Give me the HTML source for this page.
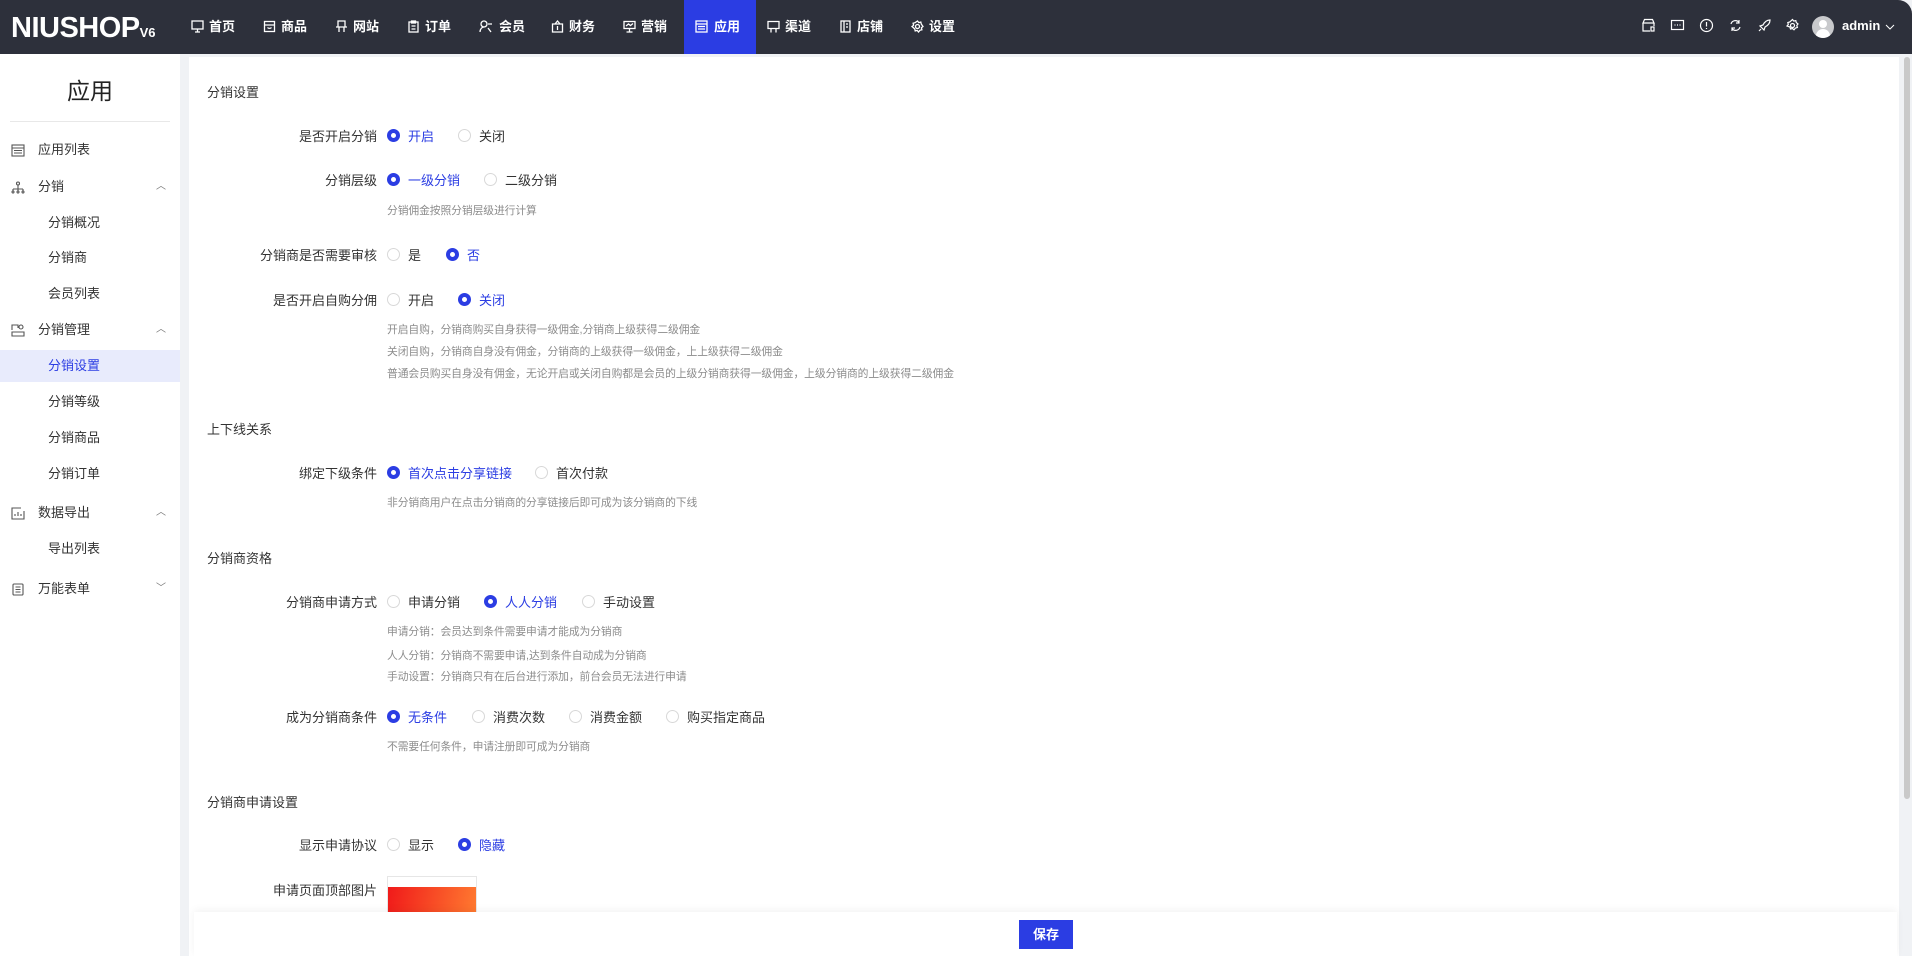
<!DOCTYPE html>
<html><head><meta charset="utf-8"><style>
*{margin:0;padding:0;box-sizing:border-box}
body{width:1912px;height:956px;overflow:hidden;background:#f0f2f5;font-family:"Liberation Sans","Noto Sans CJK SC",sans-serif;color:#333;position:relative;font-size:14px}
.top{position:absolute;left:0;top:0;width:1912px;height:54px;background:#2d303b;border-radius:0 14px 0 0}
.logo{position:absolute;left:11px;top:12px;color:#fff;font-size:29px;font-weight:bold;letter-spacing:-0.5px}
.logo small{font-size:13px;letter-spacing:0}
.nav{position:absolute;top:0;height:54px;width:72px;color:#fff;font-weight:bold;font-size:13px;line-height:54px;padding-left:0}
.nav svg{position:absolute;left:0;top:20px}
.nav span{position:absolute;left:18px}
.act{background:#2b3de3}
.ri{position:absolute;top:18px}
.side{position:absolute;left:0;top:54px;width:180px;height:902px;background:#fff}
.side h1{position:absolute;left:0;width:180px;text-align:center;top:18px;font-size:23px;font-weight:normal;color:#222}
.sep{position:absolute;left:10px;width:160px;top:67px;border-top:1px solid #e8e8e8}
.mi{position:absolute;left:0;width:180px;height:36px;line-height:36px;font-size:13px;color:#333}
.mi svg{position:absolute;left:11px;top:12px}
.mi .t{position:absolute;left:38px}
.mi .s{position:absolute;left:48px}
.mi .c{position:absolute;left:156px;top:0;font-size:10px;color:#777}
.mi.on{background:#e8ebfc;color:#2b3de3}
.main{position:absolute;left:189px;top:57px;width:1710px;height:899px;background:#fff}
.h{position:absolute;left:207px;font-size:13px;color:#333}
.lb{position:absolute;right:1535px;font-size:13px;color:#333;white-space:nowrap}
.r{position:absolute;font-size:13px;color:#333;white-space:nowrap;padding-left:21px}
.r::before{content:"";position:absolute;left:0;top:50%;margin-top:-7px;width:13px;height:13px;border:1px solid #d8d8d8;border-radius:50%;box-sizing:border-box;background:#fff}
.r.on{color:#2b3de3}
.r.on::before{border:4px solid #2b3de3;background:#fff}
.hint{position:absolute;left:387px;font-size:10.8px;color:#8c8c8c;white-space:nowrap;letter-spacing:-0.1px}
.bar{position:absolute;left:194px;top:912px;width:1703px;height:44px;background:#fff;box-shadow:0 -2px 8px rgba(0,0,0,0.05)}
.btn{position:absolute;left:1019px;top:920px;width:54px;height:29px;background:#2b3de3;color:#fff;font-size:13px;font-weight:bold;text-align:center;line-height:29px}
.sb{position:absolute;left:1904px;top:57px;width:6px;height:742px;background:#c9c9c9;border-radius:3px}
</style></head><body>
<div class="top">
<div class="logo">NIUSHOP<small>V6</small></div>
<div class="nav" style="left:191px"><svg width="13" height="13" viewBox="0 0 13 13" fill="none" stroke="#fff" stroke-width="1.3"><rect x="1" y="1" width="11" height="8"/><path d="M6.5 9v3M4 12h5"/></svg><span>首页</span></div>
<div class="nav" style="left:263px"><svg width="13" height="13" viewBox="0 0 13 13" fill="none" stroke="#fff" stroke-width="1.3"><rect x="1.5" y="1.5" width="10" height="10"/><path d="M1.5 5h10M4.5 7.5c1 1.2 3 1.2 4 0"/></svg><span>商品</span></div>
<div class="nav" style="left:335px"><svg width="13" height="13" viewBox="0 0 13 13" fill="none" stroke="#fff" stroke-width="1.3"><path d="M3 1h7v6H3zM1 7h11M4 7v5M9 7v5"/></svg><span>网站</span></div>
<div class="nav" style="left:407px"><svg width="13" height="13" viewBox="0 0 13 13" fill="none" stroke="#fff" stroke-width="1.3"><rect x="2" y="2" width="9" height="10"/><path d="M4.5 1h4v2h-4zM4.5 6h4M4.5 9h4"/></svg><span>订单</span></div>
<div class="nav" style="left:479px"><svg width="14" height="13" viewBox="0 0 14 13" fill="none" stroke="#fff" stroke-width="1.3"><circle cx="5" cy="4" r="3"/><path d="M1 12c0-3 2-5 4-5M9 8l3 4M9 4h4"/></svg><span style="left:20px">会员</span></div>
<div class="nav" style="left:551px"><svg width="13" height="13" viewBox="0 0 13 13" fill="none" stroke="#fff" stroke-width="1.3"><path d="M1.5 4h10v8h-10zM4 4l2.5-3 2.5 3M6.5 6v4"/></svg><span>财务</span></div>
<div class="nav" style="left:623px"><svg width="13" height="13" viewBox="0 0 13 13" fill="none" stroke="#fff" stroke-width="1.3"><rect x="1" y="1.5" width="11" height="7"/><path d="M3 6l2.5-2 2 1.5L10 3.5M6.5 8.5v3M3.5 12h6"/></svg><span>营销</span></div>
<div class="nav act" style="left:684px;padding-left:0"><svg style="left:11px" width="13" height="13" viewBox="0 0 13 13" fill="none" stroke="#fff" stroke-width="1.3"><rect x="1" y="1" width="11" height="11"/><path d="M1 4h11M3 6.5h7M3 9h7"/></svg><span style="left:30px">应用</span></div>
<div class="nav" style="left:767px"><svg width="13" height="13" viewBox="0 0 13 13" fill="none" stroke="#fff" stroke-width="1.3"><path d="M1 1.5h11v7H1zM4 8.5v4M9 8.5v4"/></svg><span>渠道</span></div>
<div class="nav" style="left:839px"><svg width="13" height="13" viewBox="0 0 13 13" fill="none" stroke="#fff" stroke-width="1.3"><rect x="2" y="1" width="9" height="11"/><path d="M5 1v11M7 4h2M7 7h2"/></svg><span>店铺</span></div>
<div class="nav" style="left:911px"><svg width="13" height="13" viewBox="0 0 13 13" fill="none" stroke="#fff" stroke-width="1.3"><circle cx="6.5" cy="6.5" r="2"/><path d="M6.5 1l1.3 1.6 2-.5.5 2L12 6.5l-1.6 1.3.5 2-2 .5-1.4 1.7-1.3-1.6-2 .5-.5-2L1 6.5l1.6-1.3-.5-2 2-.5z"/></svg><span>设置</span></div>
<svg class="ri" style="left:1641px" width="15" height="15" viewBox="0 0 15 15" fill="none" stroke="#fff" stroke-width="1.2"><path d="M2 5l1.5-3.5h8L13 5H2zM2 5v8h7M13 5v3"/><rect x="10" y="9" width="3" height="4"/></svg>
<svg class="ri" style="left:1670px" width="15" height="15" viewBox="0 0 15 15" fill="none" stroke="#fff" stroke-width="1.2"><rect x="1.5" y="2.5" width="12" height="9"/><path d="M4.5 7h1M7 7h1M9.5 7h1"/></svg>
<svg class="ri" style="left:1699px" width="15" height="15" viewBox="0 0 15 15" fill="none" stroke="#fff" stroke-width="1.2"><circle cx="7.5" cy="7.5" r="6"/><path d="M7.5 4v4.5M7.5 10v1"/></svg>
<svg class="ri" style="left:1728px" width="15" height="15" viewBox="0 0 15 15" fill="none" stroke="#fff" stroke-width="1.2"><path d="M3 6a4.5 4.5 0 0 1 8-1.5M12 9a4.5 4.5 0 0 1-8 1.5M11 2v3H8M4 13v-3h3"/></svg>
<svg class="ri" style="left:1757px" width="15" height="15" viewBox="0 0 15 15" fill="none" stroke="#fff" stroke-width="1.2"><path d="M5 10l-2-2 3-1c2-4 5-5 7-5 0 2-1 5-5 7l-1 3-2-2zM4 11l-2 2"/></svg>
<svg class="ri" style="left:1785px" width="15" height="15" viewBox="0 0 15 15" fill="none" stroke="#fff" stroke-width="1.2"><circle cx="7.5" cy="7.5" r="2"/><path d="M7.5 1.5l1.3 1.6 2-.5.5 2 1.7 1.4-1.2 1.5.6 2-2 .6-1.4 1.7-1.5-1.3-2 .5-.6-2L2 8l1.3-1.5-.5-2 2-.5z"/></svg>
<div style="position:absolute;left:1812px;top:16px;width:22px;height:22px;border-radius:50%;background:#c8c9cc;overflow:hidden"><div style="position:absolute;left:7px;top:4px;width:8px;height:8px;border-radius:50%;background:#fff"></div><div style="position:absolute;left:4px;top:13px;width:14px;height:10px;border-radius:7px 7px 0 0;background:#fff"></div></div>
<div style="position:absolute;left:1842px;top:18px;color:#fff;font-weight:bold;font-size:13px">admin</div>
<svg style="position:absolute;left:1885px;top:23px" width="10" height="8" viewBox="0 0 10 8" fill="none" stroke="#fff" stroke-width="1"><path d="M1 2l4 4 4-4"/></svg>
</div>

<div class="side">
<h1>应用</h1>
<div class="sep"></div>
</div>
<div class="mi" style="top:132px"><svg width="14" height="13" viewBox="0 0 14 13" fill="none" stroke="#555" stroke-width="1.1"><rect x="1" y="1" width="12" height="11"/><path d="M1 4h12M3 6.5h8M3 9h8"/></svg><span class="t">应用列表</span></div>
<div class="mi" style="top:169px"><svg width="14" height="13" viewBox="0 0 14 13" fill="none" stroke="#555" stroke-width="1.1"><circle cx="7" cy="2.5" r="1.5"/><path d="M7 4v4M2 8h10M2 8v2M7 8v2M12 8v2"/><circle cx="2" cy="11" r="1"/><circle cx="7" cy="11" r="1"/><circle cx="12" cy="11" r="1"/></svg><span class="t">分销</span><span class="c">︿</span></div>
<div class="mi" style="top:205px"><span class="s">分销概况</span></div>
<div class="mi" style="top:240px"><span class="s">分销商</span></div>
<div class="mi" style="top:276px"><span class="s">会员列表</span></div>
<div class="mi" style="top:312px"><svg width="14" height="13" viewBox="0 0 14 13" fill="none" stroke="#555" stroke-width="1.1"><path d="M1 6V1h6v3M1 8h12v4H1z"/><circle cx="10" cy="3" r="2"/></svg><span class="t">分销管理</span><span class="c">︿</span></div>
<div class="mi on" style="top:350px;height:32px;line-height:32px"><span class="s">分销设置</span></div>
<div class="mi" style="top:384px"><span class="s">分销等级</span></div>
<div class="mi" style="top:420px"><span class="s">分销商品</span></div>
<div class="mi" style="top:456px"><span class="s">分销订单</span></div>
<div class="mi" style="top:495px"><svg width="14" height="13" viewBox="0 0 14 13" fill="none" stroke="#555" stroke-width="1.1"><path d="M10 1H1v11h12V4M4 9V7M7 9V5M10 9V7"/></svg><span class="t">数据导出</span><span class="c">︿</span></div>
<div class="mi" style="top:531px"><span class="s">导出列表</span></div>
<div class="mi" style="top:571px"><svg width="14" height="13" viewBox="0 0 14 13" fill="none" stroke="#555" stroke-width="1.1"><rect x="2" y="1" width="10" height="11" rx="1"/><path d="M4.5 4h5M4.5 6.5h5M4.5 9h5"/></svg><span class="t">万能表单</span><span class="c">﹀</span></div>

<div class="main"></div>
<div class="h" style="top:82px">分销设置</div>
<div class="lb" style="top:126px">是否开启分销</div><span class="r on" style="left:387px;top:126px">开启</span><span class="r" style="left:458px;top:126px">关闭</span>
<div class="lb" style="top:170px">分销层级</div><span class="r on" style="left:387px;top:170px">一级分销</span><span class="r" style="left:484px;top:170px">二级分销</span>
<div class="hint" style="top:202px">分销佣金按照分销层级进行计算</div>
<div class="lb" style="top:245px">分销商是否需要审核</div><span class="r" style="left:387px;top:245px">是</span><span class="r on" style="left:446px;top:245px">否</span>
<div class="lb" style="top:290px">是否开启自购分佣</div><span class="r" style="left:387px;top:290px">开启</span><span class="r on" style="left:458px;top:290px">关闭</span>
<div class="hint" style="top:321px">开启自购，分销商购买自身获得一级佣金,分销商上级获得二级佣金</div>
<div class="hint" style="top:343px">关闭自购，分销商自身没有佣金，分销商的上级获得一级佣金，上上级获得二级佣金</div>
<div class="hint" style="top:365px">普通会员购买自身没有佣金，无论开启或关闭自购都是会员的上级分销商获得一级佣金，上级分销商的上级获得二级佣金</div>
<div class="h" style="top:419px">上下线关系</div>
<div class="lb" style="top:463px">绑定下级条件</div><span class="r on" style="left:387px;top:463px">首次点击分享链接</span><span class="r" style="left:535px;top:463px">首次付款</span>
<div class="hint" style="top:494px">非分销商用户在点击分销商的分享链接后即可成为该分销商的下线</div>
<div class="h" style="top:548px">分销商资格</div>
<div class="lb" style="top:592px">分销商申请方式</div><span class="r" style="left:387px;top:592px">申请分销</span><span class="r on" style="left:484px;top:592px">人人分销</span><span class="r" style="left:582px;top:592px">手动设置</span>
<div class="hint" style="top:623px">申请分销：会员达到条件需要申请才能成为分销商</div>
<div class="hint" style="top:647px">人人分销：分销商不需要申请,达到条件自动成为分销商</div>
<div class="hint" style="top:668px">手动设置：分销商只有在后台进行添加，前台会员无法进行申请</div>
<div class="lb" style="top:707px">成为分销商条件</div><span class="r on" style="left:387px;top:707px">无条件</span><span class="r" style="left:472px;top:707px">消费次数</span><span class="r" style="left:569px;top:707px">消费金额</span><span class="r" style="left:666px;top:707px">购买指定商品</span>
<div class="hint" style="top:738px">不需要任何条件，申请注册即可成为分销商</div>
<div class="h" style="top:792px">分销商申请设置</div>
<div class="lb" style="top:835px">显示申请协议</div><span class="r" style="left:387px;top:835px">显示</span><span class="r on" style="left:458px;top:835px">隐藏</span>
<div class="lb" style="top:880px">申请页面顶部图片</div>
<div style="position:absolute;left:387px;top:876px;width:90px;height:40px;border:1px solid #e6e6e6;border-bottom:none;background:#fff"><div style="position:absolute;left:0;top:10px;width:88px;height:30px;background:linear-gradient(100deg,#f01a1a,#ff7a30)"></div></div>
<div class="bar"></div>
<div class="btn">保存</div>
<div class="sb"></div>
</body></html>
